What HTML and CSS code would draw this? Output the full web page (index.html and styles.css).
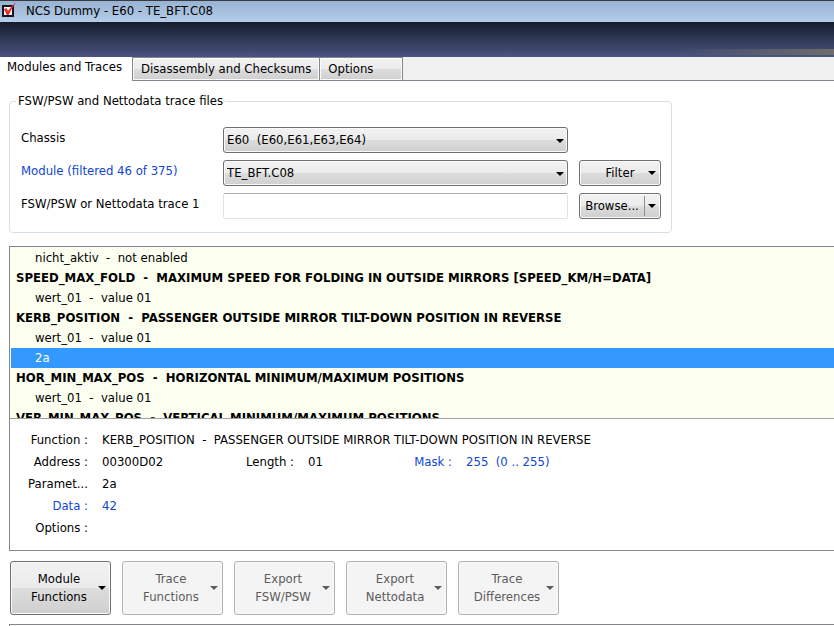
FILE: index.html
```html
<!DOCTYPE html>
<html lang="en">
<head>
    <meta charset="UTF-8">
    <meta name="viewport" content="width=device-width, initial-scale=1.0">
    <title>NCS Dummy - E60 - TE_BFT.C08</title>
    <link rel="stylesheet" href="styles.css">
</head>
<body>
    <header class="title-bar">
        <svg class="app-icon" width="16" height="19" viewBox="0 0 16 19" aria-hidden="true">
            <rect x="0" y="3" width="12" height="12" fill="#17171c"/>
            <rect x="2" y="5" width="8" height="8" fill="#f4f4f4"/>
            <path d="M2 7.5 L4.500 6 L6 9 Q9 4 14.500 0 Q9.500 6 6.500 13 L5 13 Z" fill="#e62828"/>
        </svg>
        <h1>NCS Dummy - E60 - TE_BFT.C08</h1>
    </header>
    <div class="banner"></div>

    <nav class="tabs" role="tablist">
        <button type="button" class="tab active" role="tab" aria-selected="true">Modules and Traces</button>
        <button type="button" class="tab" role="tab" aria-selected="false">Disassembly and Checksums</button>
        <button type="button" class="tab tab-options" role="tab" aria-selected="false">Options</button>
    </nav>

    <main class="panel">
        <form>
            <fieldset class="trace-files">
                <legend>FSW/PSW and Nettodata trace files</legend>
                <div class="fields">
                    <label for="chassis">Chassis</label>
                    <div class="select-box">
                        <select id="chassis" name="chassis">
                            <option>E60&nbsp; (E60,E61,E63,E64)</option>
                        </select>
                    </div>
                    <span></span>

                    <label for="module" class="changed">Module (filtered 46 of 375)</label>
                    <div class="select-box">
                        <select id="module" name="module">
                            <option>TE_BFT.C08</option>
                        </select>
                    </div>
                    <button type="button" class="btn small-btn"><span>Filter</span><i class="arrow"></i></button>

                    <label for="trace">FSW/PSW or Nettodata trace 1</label>
                    <input type="text" id="trace" name="trace">
                    <button type="button" class="btn small-btn split"><span>Browse...</span><i class="arrow"></i></button>
                </div>
            </fieldset>
        </form>

        <section class="functions">
            <ul class="function-list">
                <li class="param">nicht_aktiv  -  not enabled</li>
                <li class="function">SPEED_MAX_FOLD  -  MAXIMUM SPEED FOR FOLDING IN OUTSIDE MIRRORS [SPEED_KM/H=DATA]</li>
                <li class="param">wert_01  -  value 01</li>
                <li class="function">KERB_POSITION  -  PASSENGER OUTSIDE MIRROR TILT-DOWN POSITION IN REVERSE</li>
                <li class="param">wert_01  -  value 01</li>
                <li class="param selected">2a</li>
                <li class="function">HOR_MIN_MAX_POS  -  HORIZONTAL MINIMUM/MAXIMUM POSITIONS</li>
                <li class="param">wert_01  -  value 01</li>
                <li class="function">VER_MIN_MAX_POS  -  VERTICAL MINIMUM/MAXIMUM POSITIONS</li>
            </ul>
            <dl class="details">
                <dt>Function :</dt>
                <dd class="wide">KERB_POSITION  -  PASSENGER OUTSIDE MIRROR TILT-DOWN POSITION IN REVERSE</dd>
                <dt>Address :</dt>
                <dd>00300D02</dd>
                <dt>Length :</dt>
                <dd>01</dd>
                <dt class="changed">Mask :</dt>
                <dd class="changed">255  (0 .. 255)</dd>
                <dt>Paramet...</dt>
                <dd class="wide">2a</dd>
                <dt class="changed">Data :</dt>
                <dd class="wide changed">42</dd>
                <dt>Options :</dt>
                <dd class="wide"></dd>
            </dl>
        </section>

        <div class="actions">
            <button type="button" class="btn action-btn"><span>Module<br>Functions</span><i class="arrow"></i></button>
            <button type="button" class="btn action-btn" disabled><span>Trace<br>Functions</span><i class="arrow"></i></button>
            <button type="button" class="btn action-btn" disabled><span>Export<br>FSW/PSW</span><i class="arrow"></i></button>
            <button type="button" class="btn action-btn" disabled><span>Export<br>Nettodata</span><i class="arrow"></i></button>
            <button type="button" class="btn action-btn" disabled><span>Trace<br>Differences</span><i class="arrow"></i></button>
        </div>

        <section class="output"></section>
    </main>
</body>
</html>
```

FILE: styles.css
```css
:root {
    --border: #828790;
    --btn-border: #707070;
    --link: #0f46d2;
    --btn-face: linear-gradient(#f2f2f2 0%, #ebebeb 49%, #dddddd 50%, #cfcfcf 100%);
}

* {
    margin: 0;
    padding: 0;
    box-sizing: border-box;
}

body {
    font-family: "DejaVu Sans Condensed", "DejaVu Sans", sans-serif;
    font-size: 13px;
    line-height: 18px;
    color: #000;
    background: #fff;
    min-height: 100vh;
    display: flex;
    flex-direction: column;
    overflow-x: hidden;
}

button, input, select {
    font: inherit;
    color: inherit;
}

.title-bar {
    display: flex;
    align-items: center;
    gap: 8px;
    height: 22px;
    padding: 0 0 1px 2px;
    border-top: 1px solid #3a3a42;
    background: linear-gradient(#98b2d2, #b4cde8);
}

.title-bar h1 {
    font-size: 13px;
    font-weight: normal;
}

.banner {
    height: 35px;
    background:
        linear-gradient(90deg, transparent, #706c69) right 0 bottom 2px / 150px 6px no-repeat,
        linear-gradient(#161c2b, #242d45 30%, #4a5480);
}

.tabs {
    display: flex;
    height: 24px;
    background: #f0f0f0;
    border-bottom: 1px solid var(--border);
}

.tab {
    padding: 0 8px;
    border: 1px solid var(--border);
    border-width: 1px 1px 0 0;
    box-shadow: inset 0 0 0 1px #fafafa;
    background: var(--btn-face);
    text-align: left;
    white-space: nowrap;
}

.tab.active {
    height: 24px;
    padding: 0 10px 4px 7px;
    border-top: none;
    box-shadow: none;
    background: #fff;
}

.tab-options {
    width: 83px;
}

.panel {
    flex: 1;
    display: flex;
    flex-direction: column;
    padding: 11px 0 0 9px;
}

.trace-files {
    max-width: 663px;
    padding: 0 10px 13px 11px;
    border: 1px solid #d5dfe5;
    border-radius: 4px;
}

.trace-files legend {
    margin-left: -5px;
    padding: 0 2px;
}

.fields {
    display: grid;
    grid-template-columns: 191px 1fr 82px;
    column-gap: 11px;
    row-gap: 7px;
    padding-top: 17px;
}

.fields label {
    padding-top: 2px;
}

.changed {
    color: var(--link);
}

.select-box {
    position: relative;
}

.select-box select {
    display: block;
    appearance: none;
    width: 100%;
    height: 26px;
    padding: 0 20px 0 3px;
    border: 1px solid var(--btn-border);
    border-radius: 3px;
    box-shadow: inset 0 0 0 1px #fafafa;
    background: var(--btn-face);
}

.arrow,
.select-box::after {
    border: 4px solid transparent;
    border-top-color: #000;
    border-bottom: none;
}

.select-box::after {
    content: "";
    position: absolute;
    right: 4px;
    top: 12px;
    pointer-events: none;
}

.fields input {
    height: 26px;
    padding: 0 4px;
    border: 1px solid #e2e3ea;
    border-top-color: #abadb3;
    border-radius: 2px;
}

.btn {
    display: flex;
    align-items: center;
    border: 1px solid var(--btn-border);
    border-radius: 3px;
    box-shadow: inset 0 0 0 1px #fafafa;
    background: var(--btn-face);
}

.btn span {
    flex: 1;
    text-align: center;
}

.btn:disabled {
    border-color: #adb2b5;
    background: #f4f4f4;
    color: #5c5c5c;
}

.btn:disabled .arrow {
    border-top-color: #5c5c5c;
}

.small-btn {
    height: 26px;
    padding: 0 4px 1px;
}

.small-btn span {
    padding-left: 8px;
}

.split span {
    padding: 0 4px 0 0;
    margin-right: 3px;
    border-right: 1px solid #8e8e8e;
    line-height: 20px;
    white-space: nowrap;
}

.functions {
    margin-top: 13px;
    border: 1px solid var(--border);
    border-right: none;
}

.function-list {
    height: 172px;
    padding: 1px 0 0 1px;
    overflow: hidden;
    list-style: none;
    background: #fcfff0;
    border-bottom: 1px solid #a0a0a0;
}

.function-list li {
    height: 20px;
    line-height: 20px;
    white-space: pre;
}

.function {
    padding-left: 5px;
    font-weight: bold;
}

.param {
    padding-left: 24px;
}

.param.selected {
    color: #fff;
    background: #3399ff;
}

.details {
    display: grid;
    grid-template-columns: 78px 120px 58px 72px 58px 1fr;
    column-gap: 14px;
    row-gap: 4px;
    padding: 12px 0 13px;
    white-space: pre;
}

.details dt {
    text-align: right;
}

.details .wide {
    grid-column: 2 / -1;
}

.actions {
    display: flex;
    gap: 11px;
    padding: 10px 1px 9px;
}

.action-btn {
    width: 101px;
    height: 54px;
    padding: 0 4px 0 9px;
}

.output {
    flex: 1;
    border: 1px solid var(--border);
    border-width: 1px 0 0 1px;
}
```
